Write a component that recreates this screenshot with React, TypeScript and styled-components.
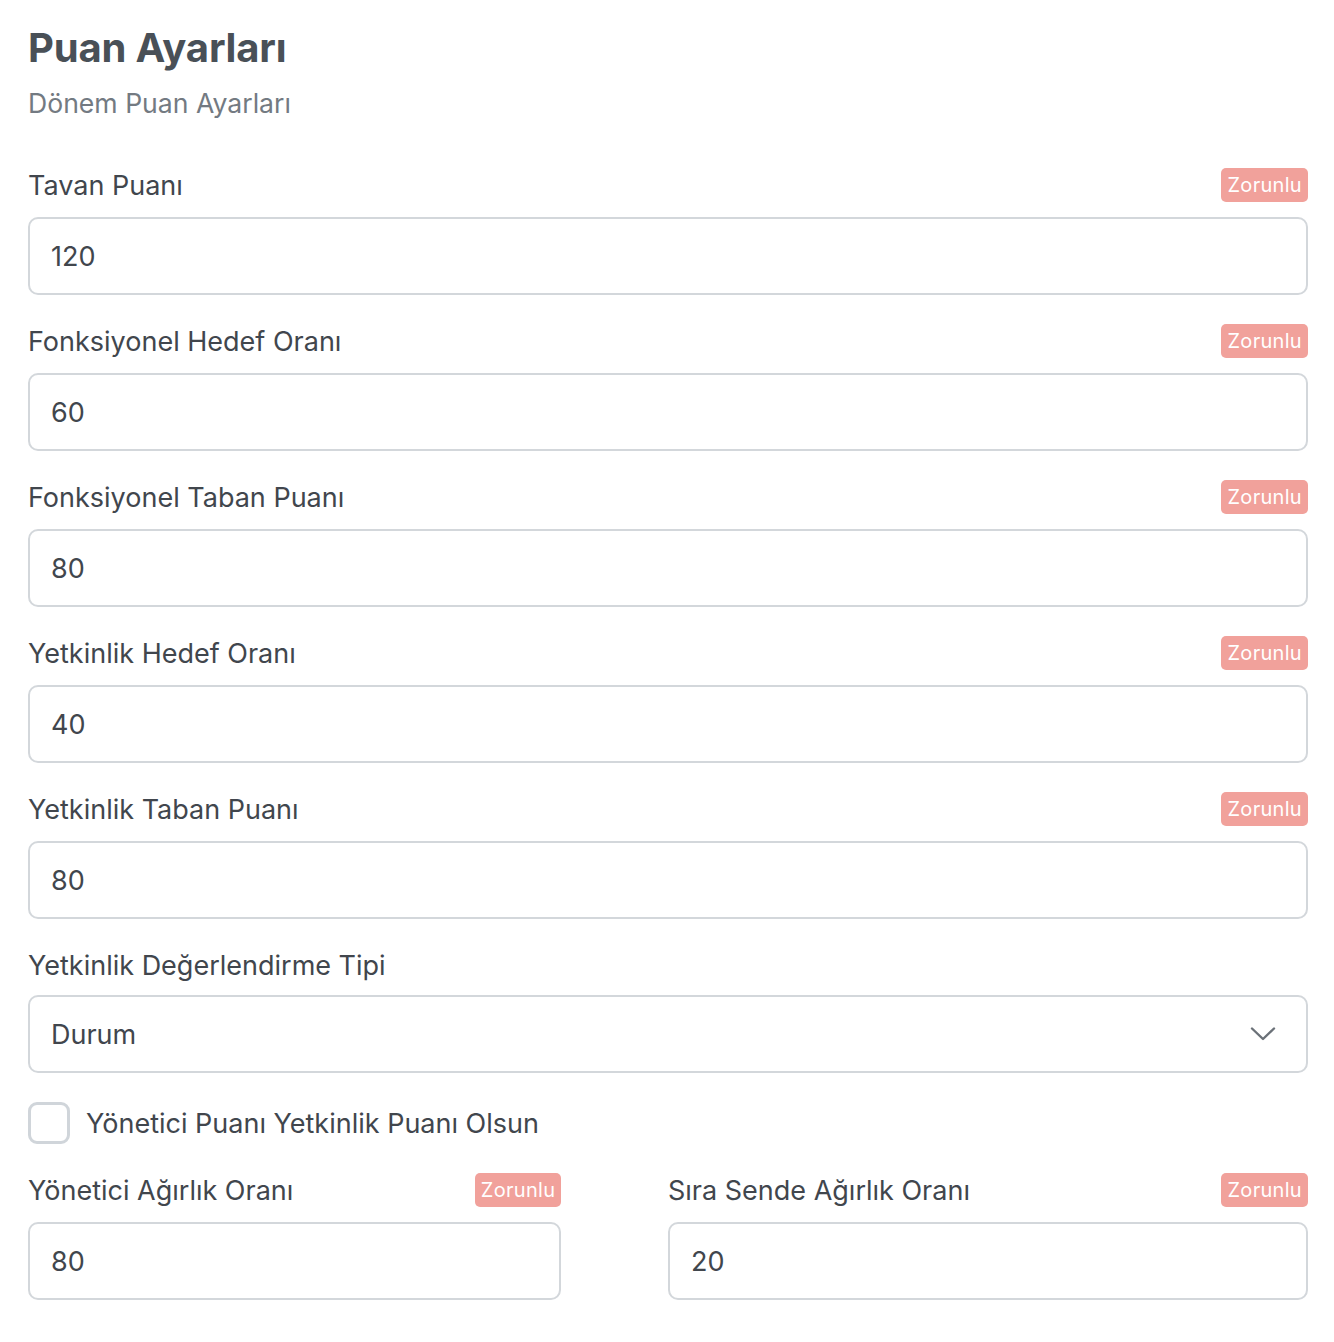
import styled, { createGlobalStyle } from "styled-components";

const GlobalStyle = createGlobalStyle`
  * {
    box-sizing: border-box;
  }
  body {
    margin: 0;
    background: #ffffff;
    font-family: "Inter", "Noto Sans", sans-serif;
    color: #41464d;
  }
`;

type Field = {
  label: string;
  value: string;
};

const fields: Field[] = [
  { label: "Tavan Puanı", value: "120" },
  { label: "Fonksiyonel Hedef Oranı", value: "60" },
  { label: "Fonksiyonel Taban Puanı", value: "80" },
  { label: "Yetkinlik Hedef Oranı", value: "40" },
  { label: "Yetkinlik Taban Puanı", value: "80" },
];

function FormField({ label, value }: Field) {
  return (
    <FieldGroup>
      <LabelRow>
        <Label>{label}</Label>
        <Badge>Zorunlu</Badge>
      </LabelRow>
      <Input defaultValue={value} />
    </FieldGroup>
  );
}

function App() {
  return (
    <>
      <GlobalStyle />
      <Page>
        <Header>
          <Title>Puan Ayarları</Title>
          <Subtitle>Dönem Puan Ayarları</Subtitle>
        </Header>

        {fields.map((f) => (
          <FormField key={f.label} label={f.label} value={f.value} />
        ))}

        <FieldGroup>
          <LabelRow $tight>
            <Label>Yetkinlik Değerlendirme Tipi</Label>
          </LabelRow>
          <SelectBox>
            <span>Durum</span>
            <svg width="26" height="16" viewBox="0 0 26 16" fill="none">
              <path
                d="M2 2.5L13 13L24 2.5"
                stroke="#6b7178"
                strokeWidth="2.4"
                strokeLinecap="round"
                strokeLinejoin="round"
              />
            </svg>
          </SelectBox>
        </FieldGroup>

        <CheckRow>
          <CheckBox />
          <CheckLabel>Yönetici Puanı Yetkinlik Puanı Olsun</CheckLabel>
        </CheckRow>

        <TwoCol>
          <LeftCol>
            <FormField label="Yönetici Ağırlık Oranı" value="80" />
          </LeftCol>
          <RightCol>
            <FormField label="Sıra Sende Ağırlık Oranı" value="20" />
          </RightCol>
        </TwoCol>
      </Page>
    </>
  );
}

export default App;

const Page = styled.div`
  width: 1334px;
  padding: 22px 26px 40px 28px;
  display: flex;
  flex-direction: column;
`;

const Header = styled.div`
  display: flex;
  flex-direction: column;
  margin-bottom: 49px;
`;

const Title = styled.h1`
  margin: 0;
  font-size: 40px;
  line-height: 52px;
  font-weight: 700;
  color: #495057;
  letter-spacing: -0.2px;
`;

const Subtitle = styled.p`
  margin: 13px 0 0;
  font-size: 26.6px;
  line-height: 32px;
  font-weight: 400;
  color: #737a82;
`;

const FieldGroup = styled.div`
  display: flex;
  flex-direction: column;
  margin-bottom: 29px;
`;

const LabelRow = styled.div<{ $tight?: boolean }>`
  display: flex;
  align-items: center;
  justify-content: space-between;
  height: 34px;
  margin-bottom: ${(p) => (p.$tight ? "13px" : "15px")};
`;

const Label = styled.label`
  font-size: 27px;
  font-weight: 400;
  color: #41464d;
`;

const Badge = styled.span`
  display: inline-flex;
  align-items: center;
  height: 34px;
  padding: 0 6px;
  border-radius: 5px;
  background: #f1a19b;
  color: #ffffff;
  font-size: 20px;
  letter-spacing: 0.3px;
`;

const Input = styled.input`
  height: 78px;
  width: 100%;
  padding: 0 21px;
  border: 2px solid #d3d7db;
  border-radius: 10px;
  font-family: inherit;
  font-size: 27px;
  color: #41464d;
  background: #ffffff;
  outline: none;
`;

const SelectBox = styled.div`
  height: 78px;
  display: flex;
  align-items: center;
  justify-content: space-between;
  padding: 0 30px 0 21px;
  border: 2px solid #d3d7db;
  border-radius: 10px;
  font-size: 27px;
  color: #41464d;
`;

const CheckRow = styled.div`
  display: flex;
  align-items: center;
  gap: 16px;
  margin: 0 0 29px;
`;

const CheckBox = styled.span`
  width: 42px;
  height: 42px;
  border: 3px solid #d0d5da;
  border-radius: 9px;
  flex-shrink: 0;
`;

const CheckLabel = styled.span`
  font-size: 27px;
  color: #41464d;
`;

const TwoCol = styled.div`
  display: grid;
  grid-template-columns: repeat(12, 1fr);
`;

const LeftCol = styled.div`
  grid-column: 1 / span 5;
`;

const RightCol = styled.div`
  grid-column: 7 / span 6;
`;
